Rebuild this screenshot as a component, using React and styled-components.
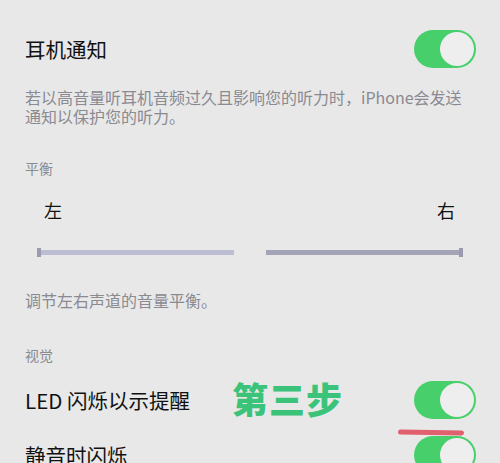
import React from "react";
import styled, { createGlobalStyle } from "styled-components";

const Global = createGlobalStyle`
  html, body {
    margin: 0;
    padding: 0;
    background: #e8e8e8;
    font-family: "Noto Sans CJK SC", "Liberation Sans", sans-serif;
  }
`;

const Page = styled.div`
  width: 500px;
  height: 463px;
  overflow: hidden;
  background: #e8e8e8;
  display: flex;
  flex-direction: column;
`;

const Row = styled.div`
  display: flex;
  align-items: center;
  justify-content: space-between;
  height: 38px;
  margin-top: ${(p) => p.mt}px;
  padding: 0 24px 0 25px;
  position: relative;
  flex-shrink: 0;
`;

const Title = styled.div`
  font-size: 20.5px;
  line-height: 1;
  color: #111;
`;

const Desc = styled.div`
  font-size: 16px;
  line-height: 19px;
  color: #8a8a92;
  margin-top: ${(p) => p.mt}px;
  padding: 0 25px;
  flex-shrink: 0;
`;

const Header = styled.div`
  font-size: 14px;
  line-height: 14px;
  color: #8a8a92;
  padding: 0 25px;
  margin-top: ${(p) => p.mt}px;
  flex-shrink: 0;
`;

const Track = styled.div`
  width: 62px;
  height: 38px;
  border-radius: 19px;
  background: #47cf6c;
  position: relative;
  flex-shrink: 0;
`;

const Knob = styled.div`
  position: absolute;
  right: 2px;
  top: 2px;
  width: 34px;
  height: 34px;
  border-radius: 50%;
  background: #eeeeee;
`;

const Toggle = () => (
  <Track>
    <Knob />
  </Track>
);

const Ends = styled.div`
  display: flex;
  justify-content: space-between;
  font-size: 18px;
  line-height: 18px;
  color: #111;
  margin-top: 26px;
  padding: 0 45px 0 44px;
  flex-shrink: 0;
`;

const Sliders = styled.div`
  display: flex;
  justify-content: space-between;
  margin-top: 31px;
  padding: 0 37px;
  flex-shrink: 0;
`;

const Bar = styled.div`
  width: 197px;
  height: 5px;
  background: ${(p) => p.c};
  position: relative;
`;

const Cap = styled.div`
  position: absolute;
  top: -2px;
  ${(p) => (p.right ? "right: 0;" : "left: 0;")}
  width: 4px;
  height: 9px;
  background: #9a9ab0;
`;

const Step = styled.div`
  position: absolute;
  left: 232px;
  top: 50%;
  transform: translateY(-56%);
  font-size: 36px;
  line-height: 1;
  font-weight: 900;
  color: #3cc37a;
  letter-spacing: 1px;
`;

const Mark = styled.div`
  position: absolute;
  left: 398px;
  bottom: -16px;
  width: 66px;
  height: 5px;
  border-radius: 3px;
  background: #e0606e;
  transform: rotate(1deg);
  z-index: 2;
`;

export default function App() {
  return (
    <Page>
      <Global />
      <Row mt={30}>
        <Title>耳机通知</Title>
        <Toggle />
      </Row>
      <Desc mt={20}>
        若以高音量听耳机音频过久且影响您的听力时，iPhone会发送
        <br />
        通知以保护您的听力。
      </Desc>
      <Header mt={35}>平衡</Header>
      <Ends>
        <span>左</span>
        <span>右</span>
      </Ends>
      <Sliders>
        <Bar c="#bcbcd2">
          <Cap />
        </Bar>
        <Bar c="#a4a4b8">
          <Cap right />
        </Bar>
      </Sliders>
      <Desc mt={36}>调节左右声道的音量平衡。</Desc>
      <Header mt={38}>视觉</Header>
      <Row mt={19}>
        <Title>LED 闪烁以示提醒</Title>
        <Step>第三步</Step>
        <Toggle />
        <Mark />
      </Row>
      <Row mt={17}>
        <Title>静音时闪烁</Title>
        <Toggle />
      </Row>
    </Page>
  );
}
